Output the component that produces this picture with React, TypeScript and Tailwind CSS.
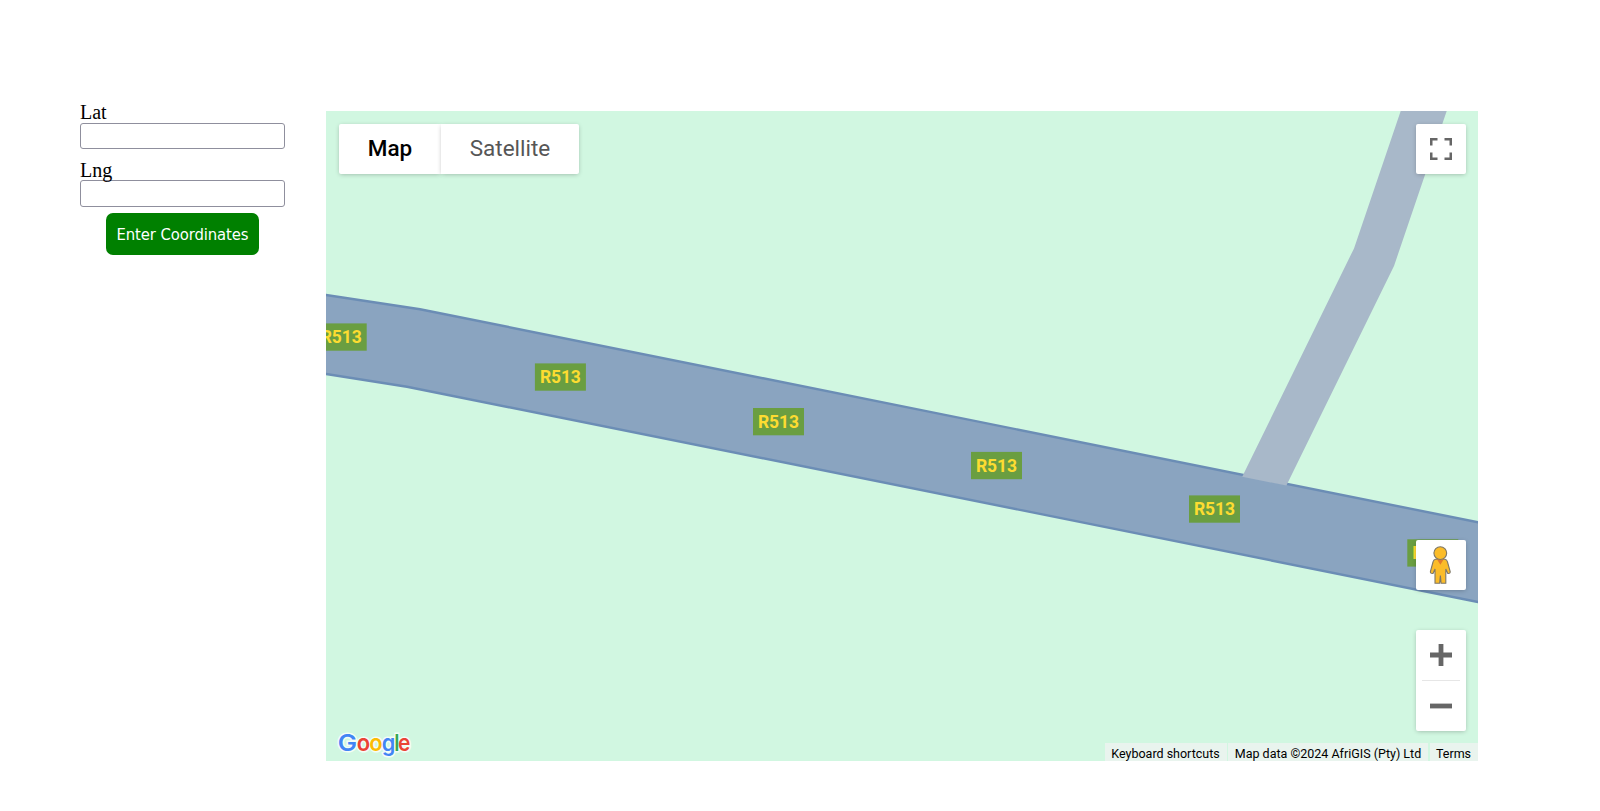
import React from "react";

const shields = [
  { x: -10.3, y: 212.4 },
  { x: 208.9, y: 252.4 },
  { x: 427, y: 297 },
  { x: 645, y: 340.9 },
  { x: 863, y: 384.4 },
  { x: 1081.3, y: 428.3 },
];

const logoLetters = [
  { c: "G", x: 11.7, w: 19.3, fill: "#4285f4" },
  { c: "o", x: 30.7, w: 13.4, fill: "#ea4335" },
  { c: "o", x: 43.3, w: 13.4, fill: "#fbbc04" },
  { c: "g", x: 55.7, w: 13.6, fill: "#4285f4" },
  { c: "l", x: 68.2, w: 5.2, fill: "#34a853" },
  { c: "e", x: 71.9, w: 12.4, fill: "#ea4335" },
];

function Logo() {
  return (
    <g className="font-['Inter',sans-serif] font-semibold">
      {["halo", "fill"].map((layer) =>
        logoLetters.map((l, i) => (
          <text
            key={layer + i}
            x={l.x}
            y="640.3"
            textLength={l.w}
            lengthAdjust="spacingAndGlyphs"
            fill={layer === "halo" ? "#ffffff" : l.fill}
            stroke={layer === "halo" ? "#ffffff" : "none"}
            strokeWidth="3"
            strokeOpacity="0.75"
            fontSize={23.5}
          >
            {l.c}
          </text>
        )),
      )}
    </g>
  );
}

function Roads() {
  return (
    <svg className="block h-full w-full" viewBox="0 0 1152 650">
      <path
        d="M-10 182.5 L0 184 L94 198.2 L1152 411.3 L1165 414 V494 L1152 491 L81 275.7 L0 263 L-10 261.5Z"
        fill="#8aa4c0"
        stroke="#6b8db5"
        strokeWidth="2.4"
      />
      <path
        d="M1074.7 0 H1120.7 L1068 155 L960.4 374.5 L916.2 365.8 L1028 137.4Z"
        fill="#a8b8c9"
      />
      {shields.map((s) => (
        <g key={s.x}>
          <rect x={s.x} y={s.y} width="51" height="27.3" fill="#6a9e41" />
          <text
            x={s.x + 25.5}
            y={s.y + 19.8}
            textAnchor="middle"
            textLength="41"
            fill="#fddc31"
            className="font-['Roboto',sans-serif] text-[17.5px] font-bold"
          >
            R513
          </text>
        </g>
      ))}
      <Logo />
    </svg>
  );
}

export default function App() {
  return (
    <main className="flex h-[811px] w-[1600px] overflow-hidden bg-white font-['Liberation_Serif',serif] text-black">
      <form className="ml-20 w-[246px] shrink-0 pt-[100px]" onSubmit={(e) => e.preventDefault()}>
        <label className="block w-[205px]">
          <span className="block h-[23px] pt-px text-[20px] leading-[23px]">Lat</span>
          <input className="block h-[26px] w-full rounded-[3px] border border-[#8f8f9d] bg-white px-1 outline-none" />
        </label>
        <label className="mt-[9px] block w-[205px]">
          <span className="block h-[22px] pt-px text-[20px] leading-[23px]">Lng</span>
          <input className="block h-[27px] w-full rounded-[3px] border border-[#8f8f9d] bg-white px-1 outline-none" />
        </label>
        <button className="ml-[26px] mt-[6px] block h-[42px] w-[153px] whitespace-nowrap rounded-[7px] bg-[#008000] pt-[3px] font-['DejaVu_Sans_Condensed','DejaVu_Sans',sans-serif] text-[16.5px] tracking-[-0.1px] text-white">
          Enter Coordinates
        </button>
      </form>
      <section className="relative mt-[111px] h-[650px] w-[1152px] overflow-hidden bg-[#d1f7e1] font-['Roboto',sans-serif]">
        <Roads />
        <div className="absolute left-[13px] top-[13px] flex h-[50px] text-[22.5px]">
          <button className="w-[102px] rounded-l-[2px] bg-white font-medium text-black shadow-[0_1px_5px_-1px_rgba(0,0,0,0.3)]">
            Map
          </button>
          <button className="w-[138px] rounded-r-[2px] bg-white text-[#565656] shadow-[0_1px_5px_-1px_rgba(0,0,0,0.3)]">
            Satellite
          </button>
        </div>
        <div className="absolute right-3 top-[13px]">
          <button className="flex size-[50px] items-center justify-center rounded-[2px] bg-white shadow-[0_1px_5px_-1px_rgba(0,0,0,0.3)]" aria-label="Fullscreen">
            <svg width="22" height="22" viewBox="0 0 22 22" fill="none" stroke="#666" strokeWidth="2.5">
              <path d="M1.25 7.5V1.25H7.5M14.5 1.25H20.75V7.5M20.75 14.5V20.75H14.5M7.5 20.75H1.25V14.5" />
            </svg>
          </button>
        </div>
        <div className="absolute right-3 top-[429px]">
          <button className="flex size-[50px] items-center justify-center rounded-[2px] bg-white shadow-[0_1px_5px_-1px_rgba(0,0,0,0.3)]" aria-label="Street View">
            <svg width="22" height="38" viewBox="0 0 22 38" className="-ml-0.5">
              <path
                d="M6.5 13.3 H16 Q18 13.8 18.5 16 L21.2 25.5 Q21.4 27.8 18.8 27.4 L16.8 23 V37.3 H12.1 L11.4 29.5 L10.6 37.3 H6 V23 L4 27.4 Q1.2 27.8 1.4 25.5 L4 16 Q4.5 13.8 6.5 13.3Z"
                fill="#fbbc29"
                stroke="#7d7768"
                strokeWidth="1.1"
              />
              <path d="M7.4 12.6H15.2L11.4 18.8Z" fill="#e17a2d" />
              <circle cx="11.3" cy="7.1" r="6.4" fill="#fbbc29" stroke="#7d7768" strokeWidth="1.1" />
            </svg>
          </button>
        </div>
        <div className="absolute right-3 top-[519px] flex h-[101px] w-[50px] flex-col items-center rounded-[2px] bg-white shadow-[0_1px_5px_-1px_rgba(0,0,0,0.3)]">
          <button className="flex h-[50px] w-full items-center justify-center" aria-label="Zoom in">
            <svg width="22" height="22" viewBox="0 0 22 22" stroke="#666" strokeWidth="4.8">
              <path d="M0 11H22M11 0V22" />
            </svg>
          </button>
          <div className="h-px w-[38px] bg-[#e6e6e6]" />
          <button className="flex h-[50px] w-full items-center justify-center" aria-label="Zoom out">
            <svg width="22" height="22" viewBox="0 0 22 22" stroke="#666" strokeWidth="4.8">
              <path d="M0 11H22" />
            </svg>
          </button>
        </div>
        <div className="absolute bottom-0 right-0 flex h-[18px] whitespace-nowrap text-[12.5px] leading-[21px] text-black">
          <span className="mr-px w-[122px] bg-[#e9f4ee] pr-px text-center">Keyboard shortcuts</span>
          <span className="mr-[2px] w-[200px] bg-[#e9f4ee] text-center">Map data ©2024 AfriGIS (Pty) Ltd</span>
          <span className="w-[48px] bg-[#e9f4ee] pr-px text-center">Terms</span>
        </div>
      </section>
    </main>
  );
}
